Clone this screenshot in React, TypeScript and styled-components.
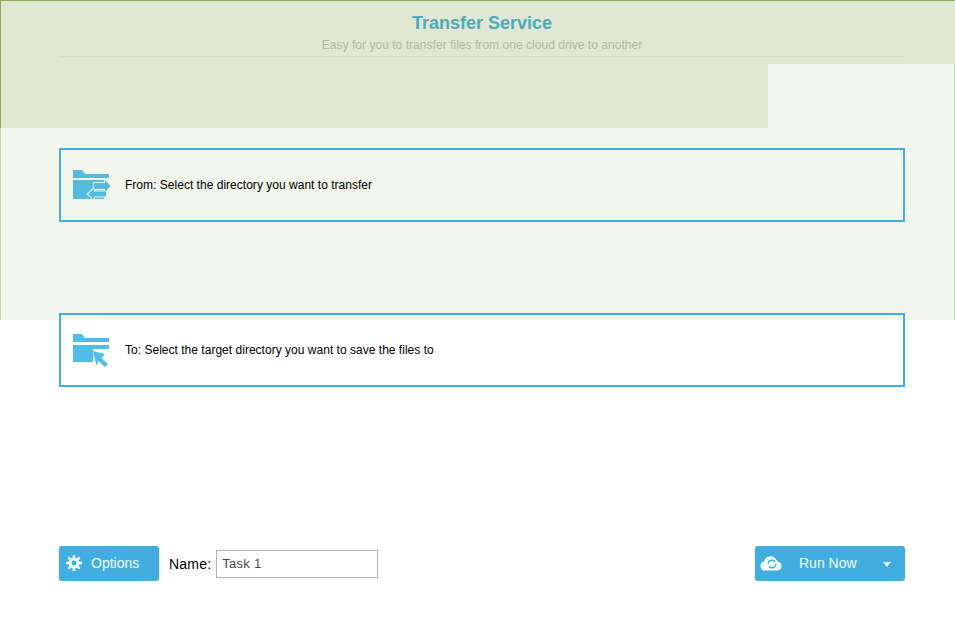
import * as React from 'react';
import styled, { createGlobalStyle } from 'styled-components';

const blue = '#41aedf';
const iconBlue = '#55bbdc';
const cursorBlue = '#50bce8';
const bandColor = '#e0e7d2';
const paleColor = '#f2f5ec';
const edgeColor = '#8aab52';
const buttonText = '#f2f9fc';

const GlobalStyle = createGlobalStyle`
  html, body {
    margin: 0;
    padding: 0;
    background: #fff;
    font-family: "Liberation Sans", Arial, sans-serif;
  }
`;

const Page = styled.div`
  position: relative;
  width: 955px;
  height: 628px;
  overflow: hidden;
`;

/* decorative stepped background, everything else sits over it */
const Backdrop = styled.div`
  position: absolute;
  top: 0;
  left: 0;
  width: 955px;
  height: 320px;
  box-sizing: border-box;
  background: ${paleColor};
  border-left: 1px solid #c9d9ae;
  border-right: 1px solid #c9d9ae;
`;

const Band = styled.div<{ $width: string; $edgeRight?: boolean }>`
  height: 64px;
  width: ${props => props.$width};
  margin-left: -1px;
  box-sizing: border-box;
  background: ${bandColor};
  border-left: 1px solid ${edgeColor};
  border-right: ${props => (props.$edgeRight ? `1px solid ${edgeColor}` : 'none')};
`;

const TopBand = styled(Band)`
  border-top: 1px solid ${edgeColor};
`;

const Content = styled.div`
  position: relative;
  box-sizing: border-box;
  width: 955px;
  height: 628px;
  padding: 0 50px 0 59px;
  display: flex;
  flex-direction: column;
`;

const Header = styled.header`
  height: 57px;
  box-sizing: border-box;
  border-bottom: 1px solid #d5dfc5;
  text-align: center;
`;

const Title = styled.h1`
  margin: 0;
  padding-top: 13px;
  font-size: 18px;
  line-height: 21px;
  font-weight: bold;
  color: #4eaabd;
`;

const Subtitle = styled.p`
  margin: 4px 0 0;
  font-size: 12px;
  line-height: 14px;
  letter-spacing: 0.04px;
  color: #b2b8a4;
`;

const Card = styled.div<{ $top: number }>`
  margin-top: ${props => props.$top}px;
  height: 74px;
  box-sizing: border-box;
  border: 2px solid ${blue};
  padding-left: 12px;
  display: flex;
  align-items: center;
  gap: 14px;
  font-size: 12px;
  letter-spacing: 0.02px;
  color: #000;
`;

const Footer = styled.div`
  margin-top: 159px;
  height: 35px;
  display: flex;
  align-items: center;
`;

const Button = styled.button`
  height: 35px;
  border: none;
  border-radius: 3px;
  background: ${blue};
  color: ${buttonText};
  font-family: inherit;
  font-size: 14px;
  padding: 0 0 2px;
  display: flex;
  align-items: center;
`;

const OptionsButton = styled(Button)`
  width: 100px;
  padding-left: 7px;
  gap: 9px;
`;

const RunButton = styled(Button)`
  width: 150px;
  margin-left: auto;
  padding-left: 5px;
`;

const RunLabel = styled.span`
  margin-left: 16px;
`;

const Caret = styled.span`
  margin: 3px 0 0 26px;
  width: 0;
  height: 0;
  border-left: 4.5px solid transparent;
  border-right: 4.5px solid transparent;
  border-top: 5px solid ${buttonText};
`;

const NameLabel = styled.label`
  margin-left: 10px;
  font-size: 14px;
  letter-spacing: 0.2px;
  color: #000;
`;

const NameInput = styled.input`
  margin-left: 5px;
  width: 162px;
  height: 28px;
  box-sizing: border-box;
  border: 1px solid #b3b3b3;
  padding: 0 5px;
  font-family: inherit;
  font-size: 13px;
  letter-spacing: 0.3px;
  color: #445;
  background: #fff;
  outline: none;
`;

const rightArrow = 'M21 13h11v-3l5.500 6-5.500 6v-3H21z';
const leftArrow = 'M33 21.500v5H21v3l-6-5.500 6-5.500v3z';

const FromIcon = () => (
  <svg width="38" height="30" viewBox="0 0 38 30">
    <path fill={iconBlue} d="M0 0h9l3 4h24v4H0z" />
    <path fill={iconBlue} d="M0 10h31v19H0z" />
    <path fill={paleColor} stroke={paleColor} strokeWidth="2" d={rightArrow} />
    <path fill={paleColor} stroke={paleColor} strokeWidth="2" d={leftArrow} />
    <path fill={iconBlue} d={rightArrow} />
    <path fill={iconBlue} d={leftArrow} />
  </svg>
);

const ToIcon = () => (
  <svg width="38" height="32" viewBox="0 0 38 32" overflow="visible">
    <path fill={cursorBlue} d="M0 0h9l3 4h24v4H0z" />
    <path fill={cursorBlue} d="M0 11h36v4H20v13H0z" />
    <path fill={cursorBlue} d="M20 17l12 3-3.300 4 6.300 6-3 3-6.700-6-1.800 5z" />
  </svg>
);

const GearIcon = () => (
  <svg width="16" height="16" viewBox="0 0 16 16">
    <circle cx="8" cy="8" r="4" fill="none" stroke={buttonText} strokeWidth="3" />
    <path
      stroke={buttonText}
      strokeWidth="2.500"
      d="M8 0v3M8 13v3M0 8h3M13 8h3M2.300 2.300l2.100 2.100M11.600 11.600l2.100 2.100M2.300 13.700l2.100-2.100M11.600 4.400l2.100-2.100"
    />
  </svg>
);

const CloudIcon = () => (
  <svg width="23" height="16" viewBox="0 0 23 16">
    <path
      fill={buttonText}
      d="M5 15.500a4.500 4.500 0 0 1-1-8.900A6.500 6.500 0 0 1 16 4.500a4 4 0 0 1 2 2.200A4.500 4.500 0 0 1 18 15.500z"
    />
    <circle cx="12" cy="9" r="3.800" fill="none" stroke={blue} strokeWidth="1.500" strokeDasharray="9 3" />
  </svg>
);

const App = () => (
  <Page>
    <GlobalStyle />
    <Backdrop>
      <TopBand $width="956px" $edgeRight />
      <Band $width="768px" />
    </Backdrop>
    <Content>
      <Header>
        <Title>Transfer Service</Title>
        <Subtitle>Easy for you to transfer files from one cloud drive to another</Subtitle>
      </Header>
      <Card $top={91}>
        <FromIcon />
        <span>From: Select the directory you want to transfer</span>
      </Card>
      <Card $top={91}>
        <ToIcon />
        <span>To: Select the target directory you want to save the files to</span>
      </Card>
      <Footer>
        <OptionsButton>
          <GearIcon />
          Options
        </OptionsButton>
        <NameLabel htmlFor="task-name">Name:</NameLabel>
        <NameInput id="task-name" defaultValue="Task 1" />
        <RunButton>
          <CloudIcon />
          <RunLabel>Run Now</RunLabel>
          <Caret />
        </RunButton>
      </Footer>
    </Content>
  </Page>
);

export default App;
